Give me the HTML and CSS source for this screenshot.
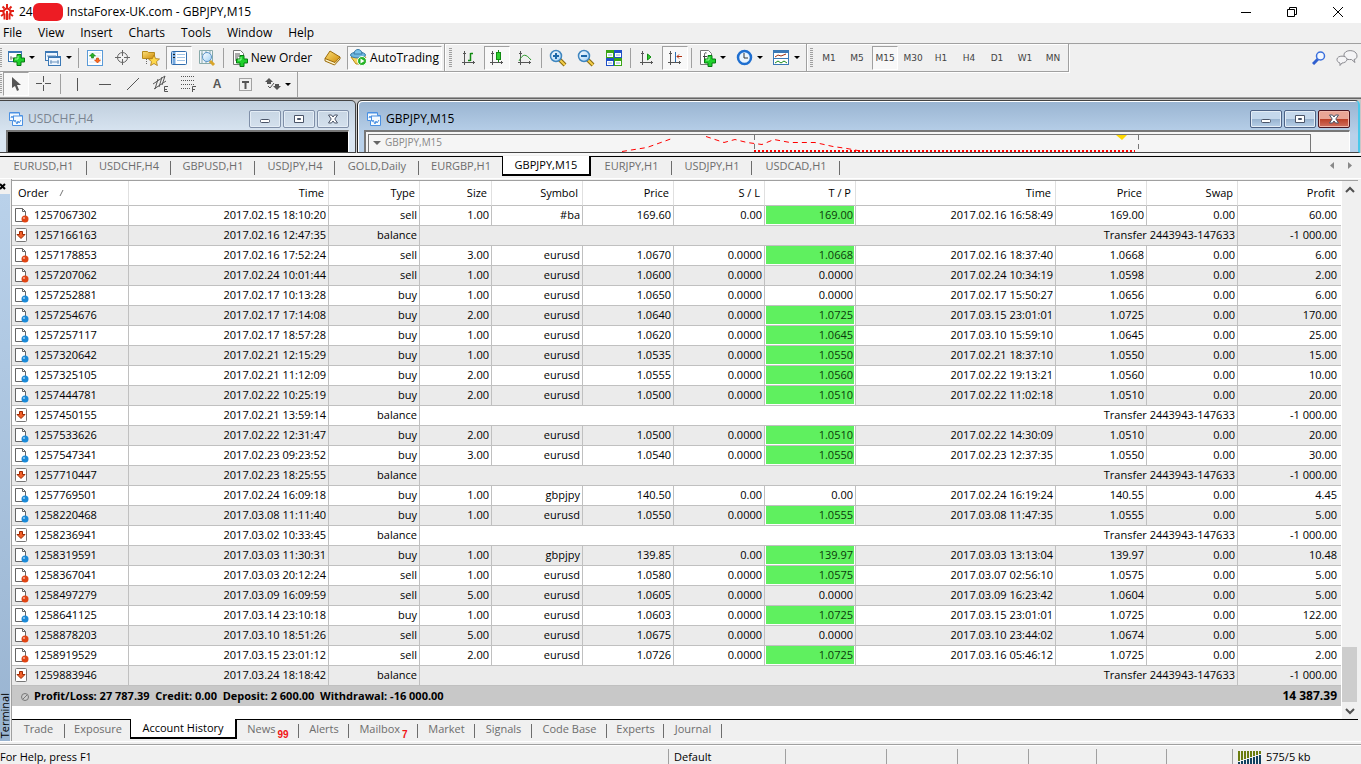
FILE: index.html
```html
<!DOCTYPE html>
<html lang="en">
<head>
    <meta charset="UTF-8">
    <meta name="viewport" content="width=device-width, initial-scale=1.0">
    <title>InstaForex-UK.com - GBPJPY,M15</title>
    <link rel="stylesheet" href="styles.css">
</head>
<body>
    <svg class="defs" aria-hidden="true">
        <defs>
            <linearGradient id="gold" x1="0" y1="0" x2="1" y2="1"><stop offset="0" stop-color="#fbe07a"/><stop offset="1" stop-color="#d08c08"/></linearGradient>
            <linearGradient id="glass" x1="0" y1="0" x2="1" y2="1"><stop offset="0" stop-color="#ffffff"/><stop offset="1" stop-color="#9fd0f5"/></linearGradient>
        </defs>
        <symbol id="plus" viewBox="0 0 12 12"><path d="M4 .5h4V4h3.500v4H8v3.500H4V8H.5V4H4z" fill="#1fd02c" stroke="#067a10"/><path d="M5 2v3H2" fill="none" stroke="#9bff9b"/></symbol>
        <symbol id="axes" viewBox="0 0 16 16"><path d="M3.500 1v14M1 12.500h13M2 3.500h3M12.500 11v3" fill="none" stroke="#555"/></symbol>
        <symbol id="chartwin" viewBox="0 0 14 14"><path d="M.5.5h10v3H13.500v10h-10v-5h-3z" fill="#f4faff" stroke="#4a90e2"/><path d="M1 1h9M4 4h9" stroke="#4a90e2"/><path d="M4.500 4v5M5 10l1-2 2 4 1-3 1 2 2-3M2 6l1-2 1 2" fill="none" stroke="#4a90e2"/></symbol>
        <symbol id="win-min" viewBox="0 0 12 12"><rect x="1.500" y="6.500" width="9" height="3" rx="1" fill="#fff" stroke="#4a5468"/></symbol>
        <symbol id="win-max" viewBox="0 0 12 12"><path d="M1.500 2.500h9v7h-9z" fill="#fff" stroke="#4a5468"/><path d="M4.500 5.500h3v1h-3z" fill="#9db9d6" stroke="#4a5468"/></symbol>
        <symbol id="win-close" viewBox="0 0 12 12"><path d="M1.500 2h3L6 4l1.500-2h3L7.800 6l2.700 4h-3L6 8l-1.500 2h-3l2.700-4z" fill="#fff" stroke="#4a5468"/></symbol>
        <symbol id="doc" viewBox="0 0 15 16"><path d="M1.500 1.500h7l3 3v10h-10z" fill="#fff" stroke="#666"/><path d="M8.500 1.500v3h3" fill="none" stroke="#666"/><circle cx="11" cy="12" r="3.500" fill="currentColor"/><circle cx="10" cy="11" r="1" fill="#fff" opacity=".6"/></symbol>
        <symbol id="transfer" viewBox="0 0 15 16"><rect x="1.500" y="1.500" width="11" height="13" rx="1" fill="#fff" stroke="#777"/><path d="M5.500 4.500h3v3h2.500L7 11.500 3 7.500h2.500z" fill="#f0602a" stroke="#a02800"/></symbol>
    </svg>

    <header class="titlebar">
        <svg width="14" height="16" viewBox="0 0 14 16" fill="none" stroke="#e22016" stroke-width="2"><path d="M7 0v4M2.500 2.500l2 2M11.500 2.500l-2 2M0 7h3M14 7h-3M1 12l3-2M13 12l-3-2"/><path d="M4 10a3.500 3.500 0 1 1 6 0M7 7v9M4.500 9.500v6M9.500 9.500v6"/></svg>
        <span class="account">24<i class="redacted"></i></span>
        <span>InstaForex-UK.com - GBPJPY,M15</span>
        <div class="captions">
            <button aria-label="Minimize"><svg width="12" height="12" stroke="#000"><path d="M1 6.500h10"/></svg></button>
            <button aria-label="Restore"><svg width="12" height="12" fill="none" stroke="#000"><path d="M1.500 3.500h7v7h-7zM3.500 3.500v-2h7v7h-2"/></svg></button>
            <button aria-label="Close"><svg width="12" height="12" stroke="#000"><path d="M1 1l10 10M11 1L1 11"/></svg></button>
        </div>
    </header>

    <nav class="menu">
        <a href="#">File</a><a href="#">View</a><a href="#">Insert</a><a href="#">Charts</a><a href="#">Tools</a><a href="#">Window</a><a href="#">Help</a>
    </nav>

    <div class="toolbar-row">
        <div class="toolbar">
            <i class="grip"></i>
            <button class="tool drop" aria-label="New chart"><svg width="18" height="18"><rect x="1.500" y="2.500" width="13" height="10" fill="#fff" stroke="#3b78b5"/><path d="M1 3h14" stroke="#3b78b5" stroke-width="2"/><path d="M4 7v4M3 9h6" stroke="#888"/><use href="#plus" x="6" y="5" width="12" height="12"/></svg></button>
            <button class="tool drop" aria-label="Profiles"><svg width="18" height="18"><g fill="#eef6ff" stroke="#3b78b5"><rect x="1.500" y="2.500" width="12" height="9"/><rect x="4.500" y="7.500" width="12" height="9"/></g><path d="M1 3h13M4 8h13" stroke="#3b78b5" stroke-width="2"/><path d="M3 7h9M6 13h9M7 11v4M14 11v4" stroke="#6b93bd"/></svg></button>
            <i class="sep"></i>
            <button class="tool" aria-label="Market Watch"><svg width="16" height="16"><rect x=".5" y=".5" width="15" height="15" fill="#fff" stroke="#5a9bd8"/><path d="M2 3h12M2 6h12M2 9h12M2 12h12" stroke="#d6e6f5"/><path d="M5.500 3l3 3h-2v2h-2V6h-2z" fill="#27b327" stroke="#0c7a0c" stroke-width=".6"/><path d="M10.500 13l-3-3h2V8h2v2h2z" fill="#ff6a20" stroke="#c03c00" stroke-width=".6"/></svg></button>
            <button class="tool" aria-label="Data Window"><svg width="16" height="16" fill="none" stroke="#666"><circle cx="7.500" cy="7.500" r="5"/><path d="M7.500 0v6M7.500 9v6M0 7.500h6M9 7.500h6"/></svg></button>
            <button class="tool" aria-label="Navigator"><svg width="18" height="16"><path d="M.5 1.500h5l1 1h6v6H.5z" fill="url(#gold)" stroke="#b58a1e"/><path d="M4.500 9v6" stroke="#666" stroke-dasharray="1 1"/><path d="M12 5l1.600 3.600 3.900.4-3 2.600.9 4L12 13.500l-3.400 2.100.9-4-3-2.600 3.900-.4z" fill="#ffd84a" stroke="#a8791a" stroke-width=".8"/></svg></button>
            <button class="tool pressed" aria-label="Terminal"><svg width="16" height="14"><rect x=".5" y=".5" width="15" height="13" rx="1" fill="#fff" stroke="#2f6cad"/><path d="M3 1v12" stroke="#74a9e0" stroke-width="3"/><path d="M6 3.500h8M6 6.500h8M6 9.500h8" stroke="#9fc3e6"/><path d="M2 3.500h2M2 6.500h2" stroke="#222"/></svg></button>
            <button class="tool" aria-label="Strategy Tester"><svg width="18" height="18"><path d="M1.500 1.500h13v13h-13z" fill="#eef4fb" stroke="#8aa"/><path d="M4 2v12M8 2v12M12 2v12M3 5h2M7 4h2" stroke="#8aa"/><circle cx="9" cy="8" r="4.500" fill="url(#glass)" stroke="#5a94c8"/><path d="M12 12l4 4" stroke="#d9a52a" stroke-width="3"/></svg></button>
            <i class="sep"></i>
            <button class="tool order"><svg width="16" height="18"><path d="M1.500 1.500h7l3 3v11h-10z" fill="#fff" stroke="#777"/><path d="M3 5h5M3 7h6M3 9h3M3 11h3" stroke="#555"/><use href="#plus" x="4" y="6" width="12" height="12"/></svg>New Order</button>
            <button class="tool" aria-label="MetaEditor"><svg width="17" height="16"><path d="M1 8.500v2.500l9.500 4L16 9V7z" fill="#fbf0c4" stroke="#9c6c0c"/><path d="M6 1l10 6-5 5.500L1 8.500z" fill="url(#gold)" stroke="#9c6c0c"/></svg></button>
            <button class="tool auto pressed"><svg width="17" height="17"><path d="M1 8h15l-5 7H6z" fill="#f6d35a" stroke="#b98a1a"/><ellipse cx="8" cy="6" rx="7.500" ry="3" fill="#6db7df" stroke="#3a7ba6"/><path d="M4 5c0-6 8-6 8 0z" fill="#7cc4ea" stroke="#3a7ba6"/><circle cx="12" cy="12" r="4.500" fill="#27b327" stroke="#fff"/><path d="M10.500 9.500v5l4-2.500z" fill="#fff"/></svg>AutoTrading</button>
        </div>
        <div class="toolbar">
            <i class="grip"></i>
            <button class="tool" aria-label="Bar Chart"><svg width="16" height="16"><use href="#axes" width="16" height="16"/><path d="M9.500 3v8M9.500 10.500H7M9.500 3.500H12" fill="none" stroke="#118a11" stroke-width="1.500"/></svg></button>
            <button class="tool pressed" aria-label="Candlesticks"><svg width="16" height="16"><use href="#axes" width="16" height="16"/><path d="M9.500 0v12" stroke="#118a11"/><rect x="7.500" y="2.500" width="4" height="7" fill="#2fd02f" stroke="#118a11"/></svg></button>
            <button class="tool" aria-label="Line Chart"><svg width="16" height="16"><use href="#axes" width="16" height="16"/><path d="M2 11c4-8 7-7 12-1" fill="none" stroke="#2a9a2a"/></svg></button>
            <i class="sep"></i>
            <button class="tool" aria-label="Zoom In"><svg width="18" height="18"><path d="M10 10l6 6" stroke="#8a6a10" stroke-width="4"/><path d="M11 11l5 5" stroke="#f5cf4a" stroke-width="2"/><circle cx="7" cy="7" r="5.500" fill="url(#glass)" stroke="#3f86bf" stroke-width="1.500"/><path d="M4 7h6M7 4v6" stroke="#1b67a8" stroke-width="2"/></svg></button>
            <button class="tool" aria-label="Zoom Out"><svg width="18" height="18"><path d="M10 10l6 6" stroke="#8a6a10" stroke-width="4"/><path d="M11 11l5 5" stroke="#f5cf4a" stroke-width="2"/><circle cx="7" cy="7" r="5.500" fill="url(#glass)" stroke="#3f86bf" stroke-width="1.500"/><path d="M4 7h6" stroke="#1b67a8" stroke-width="2"/></svg></button>
            <button class="tool" aria-label="Tile Windows"><svg width="16" height="16"><path d="M0 0h8v8H0zM8 8h8v8H8z" fill="#3aa516"/><path d="M8 0h8v8H8zM0 8h8v8H0z" fill="#1f50c8"/><path d="M1 3h6v4H1zM9 3h6v4H9zM1 11h6v4H1zM9 11h6v4H9z" fill="#fff"/><path d="M2 5h4M10 5h4M2 13h4M10 13h4" stroke="#8fb0d8"/></svg></button>
            <i class="sep"></i>
            <button class="tool" aria-label="Auto Scroll"><svg width="16" height="16"><use href="#axes" width="16" height="16"/><path d="M8.500 4v6l3.500-3z" fill="#2fd02f" stroke="#118a11"/></svg></button>
            <button class="tool pressed" aria-label="Chart Shift"><svg width="16" height="16"><use href="#axes" width="16" height="16"/><path d="M8.500 2v10" stroke="#2b6fb3"/><path d="M10 6.500h5M12 4.500l-2 2 2 2" fill="none" stroke="#b03010"/></svg></button>
            <i class="sep"></i>
            <button class="tool drop" aria-label="Indicators"><svg width="17" height="18"><path d="M1.500 1.500h8l3 3v11h-11z" fill="#fff" stroke="#777"/><path d="M7.500 4c-2-1-2 1-2 3v5M4 7.500h4" fill="none" stroke="#444"/><use href="#plus" x="5" y="6" width="12" height="12"/></svg></button>
            <button class="tool drop" aria-label="Periods"><svg width="17" height="17"><circle cx="8.500" cy="8.500" r="6.500" fill="#eaf5ff" stroke="#1f6fd0" stroke-width="2.500"/><path d="M8 4v5h4" fill="none" stroke="#333"/></svg></button>
            <button class="tool drop" aria-label="Templates"><svg width="17" height="16"><rect x=".5" y=".5" width="15" height="14" fill="#fff" stroke="#3b78b5"/><path d="M0 1.500h16" stroke="#3b78b5" stroke-width="3"/><path d="M2 7l3-2 3 1 5-2" fill="none" stroke="#a03010"/><path d="M1 8.500h14" stroke="#3b78b5"/><path d="M2 13l3-2 3 2 3-2 3 2" fill="none" stroke="#1a8a1a"/></svg></button>
        </div>
        <div class="toolbar periods">
            <i class="grip"></i>
            <button class="tool">M1</button><button class="tool">M5</button><button class="tool pressed">M15</button><button class="tool">M30</button><button class="tool">H1</button><button class="tool">H4</button><button class="tool">D1</button><button class="tool">W1</button><button class="tool">MN</button>
        </div>
        <div class="extras">
            <button class="tool" aria-label="Search"><svg width="14" height="14"><path d="M6 8l-5 5" stroke="#2f5fcf" stroke-width="3"/><circle cx="8.500" cy="5" r="4" fill="#f3f8ff" stroke="#3a6fdc" stroke-width="1.500"/></svg></button>
            <button class="tool" aria-label="Community"><svg width="22" height="16" fill="#f4f4f6" stroke="#8a8a90"><path d="M8 5c0-6 13-6 13 1 0 2-1 3-3 3.500l1 3-3.500-3C10 10 8 8 8 5z"/><path d="M1 9.500C1 5 11 5 11 9.500c0 2-3 3.500-5 3.500L4 15.500V13c-2-.5-3-2-3-3.500z"/></svg></button>
        </div>
    </div>

    <div class="toolbar-row lines">
        <div class="toolbar">
            <i class="grip"></i>
            <button class="tool pressed" aria-label="Cursor"><svg width="12" height="16"><path d="M2 1v11l3-2 2 5 2-1-2-5h4z" fill="#555"/></svg></button>
            <button class="tool" aria-label="Crosshair"><svg width="16" height="16" stroke="#555"><path d="M7.500 0v6M7.500 9v6M0 7.500h6M9 7.500h6"/></svg></button>
            <i class="sep"></i>
            <button class="tool" aria-label="Vertical Line"><svg width="14" height="14" stroke="#555"><path d="M7.500 1v13"/></svg></button>
            <button class="tool" aria-label="Horizontal Line"><svg width="14" height="14" stroke="#555"><path d="M1 7.500h12"/></svg></button>
            <button class="tool" aria-label="Trendline"><svg width="14" height="14" stroke="#555"><path d="M1 13L13 1"/></svg></button>
            <button class="tool" aria-label="Equidistant Channel"><svg width="18" height="18" fill="none" stroke="#555"><path d="M1 9L13 1M2 14L14 6M3 14l3-10M7 12l3-10M10 10l3-9M16 11.500h-3.500v5H16M12 14.500h3"/></svg></button>
            <button class="tool" aria-label="Fibonacci"><svg width="18" height="18" fill="none" stroke="#555"><path d="M1 1.500h14M1 5.500h14M1 9.500h14M1 13.500h9" stroke-dasharray="1 1"/><path d="M12.500 17v-5.500H16M12 14.500h3"/></svg></button>
            <button class="tool letter">A</button>
            <button class="tool" aria-label="Text Label"><svg width="15" height="15" fill="none" stroke="#555"><path d="M1.500 1.500h12v12h-12z" stroke-dasharray="1 1"/><path d="M4 5h7M7.500 5v7" stroke-width="2"/></svg></button>
            <button class="tool drop" aria-label="Arrows"><svg width="16" height="14" fill="#555"><path d="M4 1l4 4H6v2H2V5H0zM12 13L8 9h2V7h4v2h2z"/><path d="M3 9l2 2 4-5" fill="none" stroke="#555"/></svg></button>
        </div>
    </div>

    <main class="workspace">
        <section class="mdi">
            <div class="mdi-title">
                <svg width="14" height="14"><use href="#chartwin" width="14" height="14"/></svg>USDCHF,H4
                <div class="mdi-buttons">
                    <button aria-label="Minimize"><svg width="12" height="12"><use href="#win-min"/></svg></button>
                    <button aria-label="Maximize"><svg width="12" height="12"><use href="#win-max"/></svg></button>
                    <button aria-label="Close"><svg width="12" height="12"><use href="#win-close"/></svg></button>
                </div>
            </div>
            <div class="chart dark"></div>
        </section>
        <section class="mdi active">
            <div class="mdi-title">
                <svg width="14" height="14"><use href="#chartwin" width="14" height="14"/></svg>GBPJPY,M15
                <div class="mdi-buttons">
                    <button aria-label="Minimize"><svg width="12" height="12"><use href="#win-min"/></svg></button>
                    <button aria-label="Maximize"><svg width="12" height="12"><use href="#win-max"/></svg></button>
                    <button class="close" aria-label="Close"><svg width="12" height="12"><use href="#win-close"/></svg></button>
                </div>
            </div>
            <div class="chart">
                <div class="plot">
                    <svg width="942" height="20">
                        <path d="M4 6h8l-4 4z" fill="#666"/>
                        <text x="16" y="11">GBPJPY,M15</text>
                        <path d="M4 17.500h8M39 17.500h6M48 17.500h4M63 17.500h7M99 17.500h10M114 17.500h3M142 17.500h4M157 17.500h6M176 17.500h5M184 17.500h7M222 17.500h13" stroke="#999"/>
                        <g fill="none" stroke="#f00"><path d="M253 16.500l25-4 25-9M337 1.500l18 6 11-3 12 3 15 2 12-5 16 3h25l18 4 14 2 16 3" stroke-dasharray="5 4"/><path d="M385 16h381" stroke-width="2" stroke-dasharray="2 2"/></g>
                        <path d="M385.500 0v20M769.500 0v20" stroke="#777" stroke-dasharray="5 4"/>
                        <path d="M747 0h11l-5 5z" fill="#ffd800"/>
                    </svg>
                </div>
                <span class="price">139.35</span>
            </div>
        </section>
    </main>

    <nav class="tabs chart-tabs">
        <a href="#">EURUSD,H1</a><a href="#">USDCHF,H4</a><a href="#">GBPUSD,H1</a><a href="#">USDJPY,H4</a><a href="#">GOLD,Daily</a><a href="#">EURGBP,H1</a><a href="#" class="current">GBPJPY,M15</a><a href="#">EURJPY,H1</a><a href="#">USDJPY,H1</a><a href="#">USDCAD,H1</a>
        <div class="tab-scroll">
            <button aria-label="Scroll left"><svg width="6" height="8"><path d="M5 0v7L1 3.500z" fill="#888"/></svg></button>
            <button aria-label="Scroll right"><svg width="6" height="8"><path d="M1 0v7l4-3.500z" fill="#888"/></svg></button>
        </div>
    </nav>

    <section class="terminal">
        <aside class="side">
            <button aria-label="Close terminal"><svg width="7" height="7" stroke="#000" stroke-width="2"><path d="M0 1l5 5M5 1L0 6"/></svg></button>
            <div class="side-title"><span>Terminal</span></div>
        </aside>
        <div class="panel">
            <div class="history">
                <table>
                    <colgroup>
                        <col class="c-order"><col class="c-time"><col class="c-std"><col class="c-size"><col class="c-std"><col class="c-std"><col class="c-std"><col class="c-std"><col class="c-time"><col class="c-std"><col class="c-std"><col>
                    </colgroup>
                    <thead>
                        <tr><th>Order <svg width="6" height="8" stroke="#777"><path d="M1 7l3-6"/></svg></th><th>Time</th><th>Type</th><th>Size</th><th>Symbol</th><th>Price</th><th>S / L</th><th>T / P</th><th>Time</th><th>Price</th><th>Swap</th><th>Profit</th></tr>
                    </thead>
                    <tbody id="orders"></tbody>
                    <tfoot>
                        <tr><td colspan="11"><svg width="10" height="16" fill="#ccc" stroke="#777"><circle cx="5" cy="9" r="3.500"/><path d="M3 11l4-4"/></svg>Profit/Loss: 27 787.39&nbsp; Credit: 0.00&nbsp; Deposit: 2 600.00&nbsp; Withdrawal: -16 000.00</td><td>14 387.39</td></tr>
                    </tfoot>
                </table>
                <div class="scrollbar">
                    <button aria-label="Scroll up"><svg width="10" height="8" fill="none" stroke="#505050" stroke-width="2"><path d="M1 6l4-4 4 4"/></svg></button>
                    <i class="thumb"></i>
                    <button aria-label="Scroll down"><svg width="10" height="8" fill="none" stroke="#505050" stroke-width="2"><path d="M1 2l4 4 4-4"/></svg></button>
                </div>
            </div>
            <nav class="tabs terminal-tabs">
                <a href="#">Trade</a><a href="#">Exposure</a><a href="#" class="current">Account History</a><a href="#">News<sub>99</sub></a><a href="#">Alerts</a><a href="#">Mailbox<sub>7</sub></a><a href="#">Market</a><a href="#">Signals</a><a href="#">Code Base</a><a href="#">Experts</a><a href="#">Journal</a>
            </nav>
        </div>
    </section>

    <footer class="status">
        <span>For Help, press F1</span><span>Default</span><span></span><span></span><span></span><span></span><span></span><span></span>
        <span><svg width="24" height="13" fill="none" stroke-width="2"><path d="M1 0v10M4 0v9M7 0v8M10 0v7M13 0v6M16 0v5M19 0v4M22 0v3" stroke="#6b7d10"/><path d="M1 11v2M4 10v3M7 9v4M10 8v5M13 7v6M16 6v7M19 5v8M22 4v9" stroke="#12405f"/></svg>575/5 kb</span>
    </footer>

    <script src="script.js"></script>
</body>
</html>
```
FILE: styles.css
```css
* {
    box-sizing: border-box;
}

body {
    margin: 0;
    min-height: 100vh;
    display: flex;
    flex-direction: column;
    background: #f0f0f0;
    color: #000;
    font-family: "Open Sans", "Noto Sans", sans-serif;
    font-size: 11px;
    line-height: 16px;
    overflow: hidden;
}

button {
    display: flex;
    align-items: center;
    justify-content: center;
    margin: 0;
    padding: 0;
    border: 0;
    background: none;
    color: inherit;
    font: inherit;
}

a {
    color: inherit;
    text-decoration: none;
}

svg {
    flex: none;
}

.defs {
    position: absolute;
    width: 0;
    height: 0;
}

/* title and menu */

.titlebar {
    display: flex;
    align-items: center;
    height: 23px;
    background: #fff;
    font-size: 12px;
}

.account {
    display: flex;
    align-items: center;
    margin: 0 4px 0 5px;
}

.redacted {
    width: 30px;
    height: 18px;
    border-radius: 6px;
    background: #ed1c24;
}

.captions {
    display: flex;
    margin-left: auto;
}

.captions button {
    width: 46px;
    height: 22px;
}

.menu {
    display: flex;
    gap: 16px;
    align-items: center;
    height: 20px;
    padding-left: 3px;
    font-size: 12px;
}

/* toolbars */

.toolbar-row {
    display: flex;
    height: 28px;
    border-top: 1px solid #a0a0a0;
}

.toolbar {
    display: flex;
    align-items: center;
    height: 28px;
    padding-right: 1px;
    border-right: 1px solid #a0a0a0;
    border-bottom: 1px solid #a0a0a0;
    box-shadow: inset 0 1px #fff, 1px 1px #fff;
}

.lines {
    height: 27px;
    border-top: 0;
    border-bottom: 1px solid #a0a0a0;
}

.lines .toolbar {
    height: 26px;
    border-bottom: 0;
    box-shadow: none;
}

.grip {
    width: 3px;
    height: 20px;
    margin: 0 3px 0 4px;
    background: repeating-linear-gradient(#a0a0a0 0 1px, #f0f0f0 1px 2px);
}

.toolbar:first-child .grip {
    width: 2px;
    margin: 0;
}

.periods .grip {
    margin: 0 2px 0 3px;
}

.sep {
    width: 1px;
    height: 20px;
    margin: 0 2px;
    background: #a0a0a0;
}

.tool {
    width: 28px;
    height: 24px;
    white-space: nowrap;
}

.tool.pressed {
    width: 26px;
    margin: 0 1px;
    border: 1px solid;
    border-color: #a0a0a0 #fff #fff #a0a0a0;
    background: #f8f8f8;
}

.tool.drop {
    width: 37px;
    gap: 4px;
}

.tool.drop::after {
    content: "";
    border: 3px solid transparent;
    border-top-color: #000;
    border-bottom: 0;
}

.tool.order,
.tool.auto {
    gap: 3px;
    font-size: 12px;
}

.tool.order {
    width: 92px;
}

.tool.auto.pressed {
    width: 95px;
}

.tool.letter {
    color: #555;
    font: bold 12px "Liberation Sans", sans-serif;
}

.periods {
    color: #444;
    font-family: "DejaVu Sans", sans-serif;
    font-size: 9px;
}

.extras {
    display: flex;
    align-items: center;
    margin-left: auto;
}

/* chart windows */

.workspace {
    display: grid;
    grid-template-columns: 356px 1fr;
    height: 57px;
    border-top: 1px solid #666;
    border-bottom: 2px solid #f8f8f8;
    background: #c8c8c8;
    overflow: hidden;
}

.mdi {
    margin-top: 1px;
    padding: 0 6px;
    border: 1px solid #444;
    border-left: 0;
    border-radius: 0 5px 0 0;
    background: linear-gradient(#c0cfde, #dae6f2 34px);
    color: #7a8490;
    overflow: hidden;
}

.mdi.active {
    margin-left: 1px;
    margin-right: 1px;
    padding-right: 8px;
    border-left: 1px solid #222;
    border-right: 2px solid #49c8ea;
    border-radius: 5px 5px 0 0;
    background: linear-gradient(#99b4d1, #b9d1ea 34px);
    box-shadow: inset 1px 1px #fff;
    color: #000;
}

.mdi-title {
    display: flex;
    align-items: center;
    gap: 5px;
    height: 29px;
    padding: 6px 0 0 3px;
    font-size: 12px;
}

.mdi-buttons {
    display: flex;
    gap: 2px;
    margin-left: auto;
}

.mdi-buttons button {
    width: 32px;
    height: 18px;
    border: 1px solid #7f8fa8;
    border-radius: 2px;
    box-shadow: inset 0 0 0 1px #e4edf6;
}

.active .mdi-buttons button {
    border-color: #4d6285;
    background: linear-gradient(#c5d8ec 50%, #97b2cf 50%, #b8d0e8);
}

.active .mdi-buttons .close {
    border-color: #4a1420;
    background: linear-gradient(#e9a596 50%, #bb3e26 50%, #d07060);
    box-shadow: inset 0 0 0 1px #f0b8ac;
}

.chart {
    display: flex;
    height: 40px;
    padding: 2px 0 0 2px;
    border: 2px solid #777;
    border-right: 1px solid #fff;
    background: #f5f5f5;
}

.chart.dark {
    background: #000;
}

.plot {
    flex: 1;
    border: 1px solid #777;
    overflow: hidden;
}

.plot text {
    fill: #888;
    font-size: 10px;
}

.price {
    width: 38px;
    padding: 14px 0 0 4px;
    color: #888;
}

/* tab strips */

.tabs {
    display: grid;
    border-top: 1px solid #000;
    color: #6d6d6d;
    line-height: 18px;
    text-align: center;
}

.tabs a {
    position: relative;
    height: 19px;
}

.tabs a::after {
    content: "";
    position: absolute;
    right: 0;
    top: 4px;
    height: 14px;
    border-right: 1px solid #6d6d6d;
}

.tabs .current {
    margin: -1px 0 0 -1px;
    height: 20px;
    border: 1px solid #000;
    border-top: 0;
    border-right-width: 2px;
    border-bottom-width: 2px;
    background: #fff;
    color: #000;
}

.tabs .current::after {
    display: none;
}

.tabs sub {
    margin-left: 2px;
    color: #f01414;
    font: bold 10px "Liberation Sans", sans-serif;
    line-height: 0;
    vertical-align: -5px;
}

.chart-tabs {
    grid-template-columns: 87px 84px 84px 80px 84px 84px 88px 81px 80px 88px 1fr;
    height: 23px;
    margin-top: 1px;
    border-bottom: 1px solid #fff;
}

.tab-scroll {
    display: flex;
    justify-content: flex-end;
    align-items: center;
    gap: 12px;
    padding: 0 8px 4px 0;
}

.terminal-tabs {
    grid-template-columns: 53px 66px 106px 62px 50px 69px 57px 57px 75px 57px 58px;
    height: 22px;
    margin-right: 3px;
}

/* terminal */

.terminal {
    display: flex;
    border-bottom: 1px solid #fff;
}

.side {
    display: flex;
    flex-direction: column;
    width: 11px;
}

.side button {
    justify-content: flex-start;
    height: 15px;
}

.side-title {
    flex: 1;
    display: flex;
    align-items: flex-end;
    width: 10px;
    padding-bottom: 3px;
    background: linear-gradient(#b9d1ea, #99b4d1);
}

.side-title span {
    line-height: 10px;
    writing-mode: vertical-rl;
    transform: rotate(180deg);
}

.panel {
    flex: 1;
    border-left: 1px solid #a0a0a0;
}

.history {
    display: flex;
    align-items: flex-start;
    height: 539px;
    margin: 1px 3px 0 0;
    border-top: 1px solid #a0a0a0;
    background: #fff;
}

table {
    flex: 1;
    width: 0;
    table-layout: fixed;
    border-spacing: 0;
    text-align: right;
    white-space: nowrap;
}

.c-order { width: 117px; }
.c-time { width: 200px; }
.c-std { width: 91px; }
.c-size { width: 72px; }

th {
    height: 25px;
    padding: 0 4px 0 6px;
    border-right: 1px solid #e0e0e0;
    border-bottom: 1px solid #c0c0c0;
    font-weight: normal;
}

th:first-child {
    text-align: left;
}

th svg {
    margin-left: 8px;
}

td {
    height: 20px;
    padding: 0 2px 1px;
    border-right: 1px solid #c0c0c0;
    border-bottom: 1px solid #c0c0c0;
}

th:last-child {
    padding-right: 6px;
    border-right: 0;
}

td:last-child {
    padding-right: 4px;
    border-right: 0;
}

tbody tr:nth-child(even) {
    background: #ebebeb;
}

td:first-child {
    text-align: left;
}

td svg {
    margin-right: 5px;
    vertical-align: top;
}

.sell { color: #e04414; }
.buy { color: #1a8ad8; }

.order-no {
    color: #000;
}

.hit {
    background: #5ff05f;
    box-shadow: inset 1px -1px #fff, inset -1px 0 #fff;
    color: #0b3a0b;
}

tfoot td {
    border: 0;
    background: #c8c8c8;
    font-weight: bold;
}

tfoot td:last-child {
    font-size: 12px;
}

tfoot svg {
    margin: 0 4px 0 6px;
}

.scrollbar {
    display: flex;
    flex-direction: column;
    align-self: stretch;
    width: 17px;
    border-left: 1px solid #fff;
    background: #f0f0f0;
}

.scrollbar button {
    height: 17px;
}

.thumb {
    width: 15px;
    height: 55px;
    margin-top: auto;
    background: #cdcdcd;
}

/* status bar */

.status {
    display: grid;
    grid-template-columns: 1fr 117px 101px 71px 71px 68px 70px 66px 129px;
    flex: 1;
    margin-top: 2px;
    padding-top: 4px;
    border-top: 1px solid #a0a0a0;
    box-shadow: inset 0 1px #fff;
}

.status span {
    display: flex;
    align-items: center;
    gap: 4px;
    height: 16px;
    padding-left: 5px;
    border-left: 1px solid #a0a0a0;
}

.status span:first-child {
    padding-left: 0;
    border-left: 0;
}
```
FILE: script.js
```js
// order, open time, type, size, symbol, price, s/l, t/p, close time, price, swap, profit, t/p hit
const orders = `
1257067302|2017.02.15 18:10:20|sell|1.00|#ba|169.60|0.00|169.00|2017.02.16 16:58:49|169.00|0.00|60.00|hit
1257166163|2017.02.16 12:47:35|balance|Transfer 2443943-147633|-1 000.00
1257178853|2017.02.16 17:52:24|sell|3.00|eurusd|1.0670|0.0000|1.0668|2017.02.16 18:37:40|1.0668|0.00|6.00|hit
1257207062|2017.02.24 10:01:44|sell|1.00|eurusd|1.0600|0.0000|0.0000|2017.02.24 10:34:19|1.0598|0.00|2.00
1257252881|2017.02.17 10:13:28|buy|1.00|eurusd|1.0650|0.0000|0.0000|2017.02.17 15:50:27|1.0656|0.00|6.00
1257254676|2017.02.17 17:14:08|buy|2.00|eurusd|1.0640|0.0000|1.0725|2017.03.15 23:01:01|1.0725|0.00|170.00|hit
1257257117|2017.02.17 18:57:28|buy|1.00|eurusd|1.0620|0.0000|1.0645|2017.03.10 15:59:10|1.0645|0.00|25.00|hit
1257320642|2017.02.21 12:15:29|buy|1.00|eurusd|1.0535|0.0000|1.0550|2017.02.21 18:37:10|1.0550|0.00|15.00|hit
1257325105|2017.02.21 11:12:09|buy|2.00|eurusd|1.0555|0.0000|1.0560|2017.02.22 19:13:21|1.0560|0.00|10.00|hit
1257444781|2017.02.22 10:25:19|buy|2.00|eurusd|1.0500|0.0000|1.0510|2017.02.22 11:02:18|1.0510|0.00|20.00|hit
1257450155|2017.02.21 13:59:14|balance|Transfer 2443943-147633|-1 000.00
1257533626|2017.02.22 12:31:47|buy|2.00|eurusd|1.0500|0.0000|1.0510|2017.02.22 14:30:09|1.0510|0.00|20.00|hit
1257547341|2017.02.23 09:23:52|buy|3.00|eurusd|1.0540|0.0000|1.0550|2017.02.23 12:37:35|1.0550|0.00|30.00|hit
1257710447|2017.02.23 18:25:55|balance|Transfer 2443943-147633|-1 000.00
1257769501|2017.02.24 16:09:18|buy|1.00|gbpjpy|140.50|0.00|0.00|2017.02.24 16:19:24|140.55|0.00|4.45
1258220468|2017.03.08 11:11:40|buy|1.00|eurusd|1.0550|0.0000|1.0555|2017.03.08 11:47:35|1.0555|0.00|5.00|hit
1258236941|2017.03.02 10:33:45|balance|Transfer 2443943-147633|-1 000.00
1258319591|2017.03.03 11:30:31|buy|1.00|gbpjpy|139.85|0.00|139.97|2017.03.03 13:13:04|139.97|0.00|10.48|hit
1258367041|2017.03.03 20:12:24|sell|1.00|eurusd|1.0580|0.0000|1.0575|2017.03.07 02:56:10|1.0575|0.00|5.00|hit
1258497279|2017.03.09 16:09:59|sell|5.00|eurusd|1.0605|0.0000|0.0000|2017.03.09 16:23:42|1.0604|0.00|5.00
1258641125|2017.03.14 23:10:18|buy|1.00|eurusd|1.0603|0.0000|1.0725|2017.03.15 23:01:01|1.0725|0.00|122.00|hit
1258878203|2017.03.10 18:51:26|sell|5.00|eurusd|1.0675|0.0000|0.0000|2017.03.10 23:44:02|1.0674|0.00|5.00
1258919529|2017.03.15 23:01:12|sell|2.00|eurusd|1.0726|0.0000|1.0725|2017.03.16 05:46:12|1.0725|0.00|2.00|hit
1259883946|2017.03.24 18:18:42|balance|Transfer 2443943-147633|-1 000.00
`;

document.getElementById('orders').innerHTML = orders.trim().split('\n').map(line => {
    const cells = line.split('|');
    const isHit = cells[12] === 'hit';
    const type = cells[2];
    const icon = type === 'balance' ? 'transfer' : 'doc';

    return '<tr>' + cells.slice(0, 12).map((text, i) => {
        if(i === 0) {
            return `<td class="${type}"><svg width="15" height="16"><use href="#${icon}"/></svg><span class="order-no">${text}</span></td>`;
        }
        if(type === 'balance' && i === 3) {
            return `<td colspan="8">${text}</td>`;
        }
        return `<td${i === 7 && isHit ? ' class="hit"' : ''}>${text}</td>`;
    }).join('') + '</tr>';
}).join('');
```
